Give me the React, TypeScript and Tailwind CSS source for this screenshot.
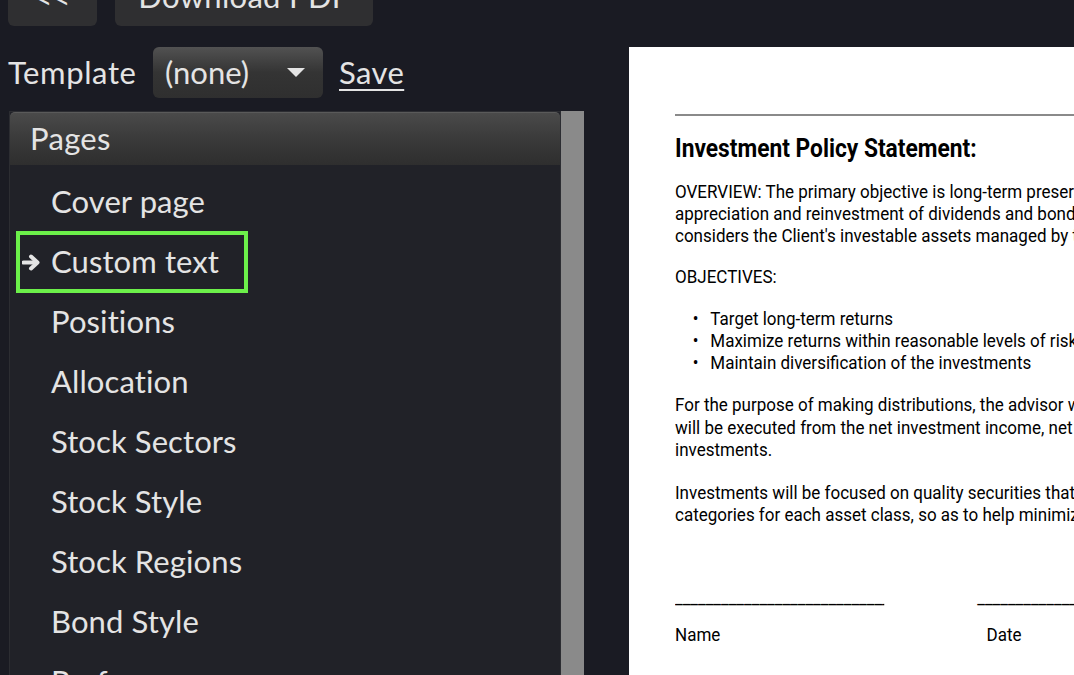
import React from "react";

const items = [
  "Cover page",
  "Custom text",
  "Positions",
  "Allocation",
  "Stock Sectors",
  "Stock Style",
  "Stock Regions",
  "Bond Style",
  "Performance",
];

const ui = { fontFamily: "Lato, 'Open Sans', sans-serif" };
const doc = { fontFamily: "Roboto, 'Liberation Sans', sans-serif" };

export default function App() {
  return (
    <div className="w-[1074px] h-[675px] overflow-hidden bg-[#1a1b23] flex text-[#e4e4e4]" style={ui}>
      {/* Left column */}
      <div className="w-[586px] shrink-0 flex flex-col">
        <div className="flex gap-[18px] pl-[8px] mt-[-26px] h-[52px]">
          <button className="w-[89px] h-[52px] rounded-[6px] bg-[#2f2f31] text-[31px] leading-none text-[#e4e4e4] flex items-center justify-center pb-[6px]">
            &lt;&lt;
          </button>
          <button className="w-[258px] h-[52px] rounded-[6px] bg-[#2f2f31] text-[31px] leading-none tracking-[0.3px] text-[#e4e4e4] flex items-center justify-center pb-[8px]">
            Download PDF
          </button>
        </div>
        <div className="flex items-center h-[51px] mt-[21px] pl-[8px]">
          <span className="text-[31px] leading-none tracking-[0.6px] w-[145px]">Template</span>
          <div className="w-[170px] h-[51px] rounded-[6px] bg-gradient-to-b from-[#525252] via-[#343434] to-[#2f2f2f] flex items-center pl-[12px] pr-[18px] justify-between">
            <span className="text-[31px] leading-none">(none)</span>
            <svg width="18" height="9" viewBox="0 0 18 9">
              <polygon points="0,0 18,0 9,9" fill="#e4e4e4" />
            </svg>
          </div>
          <span className="ml-[16px] text-[31px] leading-none tracking-[0.4px] underline underline-offset-[5px] decoration-2">Save</span>
        </div>
        <div className="flex mt-[13px] ml-[9px] flex-1">
          <div className="w-[552px] bg-[#212228] border-l border-t border-r border-[#2c2d32] flex flex-col">
            <div className="h-[53px] rounded-t-[5px] bg-gradient-to-b from-[#4a4a4a] via-[#3a3a3a] to-[#2e2e2e] border-t border-[#5a5a5a] flex items-center pl-[20px] pb-[2px]">
              <span className="text-[31px] leading-none tracking-[0.3px]">Pages</span>
            </div>
            <div className="pt-[8px] flex flex-col">
              {items.map((it) => (
                <div key={it} className="relative h-[60px] flex items-center pl-[41px] shrink-0 pb-[4px]">
                  {it === "Custom text" && (
                    <>
                      <div className="absolute left-[6px] top-[-2px] w-[232px] h-[62px] border-[4px] border-[#6cf04a]" />
                      <svg className="absolute left-[12px] top-[21px]" width="18" height="17" viewBox="0 0 18 17">
                        <path d="M1.5 8.5 H13" stroke="#e4e4e4" strokeWidth="4" strokeLinecap="round" />
                        <path d="M9 2.5 L15.5 8.5 L9 14.5" stroke="#e4e4e4" strokeWidth="4" fill="none" strokeLinecap="round" strokeLinejoin="round" />
                      </svg>
                    </>
                  )}
                  <span className="text-[31px] leading-none tracking-[0.1px]">{it}</span>
                </div>
              ))}
            </div>
          </div>
          <div className="w-[23px] bg-[#8a8a8a]" />
        </div>
      </div>

      {/* Document preview */}
      <div className="ml-[43px] mt-[47px] flex-1 bg-white overflow-hidden text-black" style={doc}>
        <div className="ml-[46px] mt-[67px] h-[2px] bg-[#8a8a8a]" />
        <div className="pl-[46px] w-[900px]">
          <div className="mt-[17px] h-[32px] whitespace-nowrap">
            <span className="inline-block origin-left scale-x-[0.91] text-[25px] font-bold leading-[32px]">Investment Policy Statement:</span>
          </div>
          <div className="origin-top-left scale-x-[0.93] text-[18.3px] leading-[22px] whitespace-nowrap">
            <div className="mt-[16px]">
              <div>OVERVIEW: The primary objective is long-term preservation of capital with growth through</div>
              <div>appreciation and reinvestment of dividends and bond interest. This Investment Policy Statement</div>
              <div>considers the Client's investable assets managed by the advisor.</div>
            </div>
            <div className="mt-[19px]">OBJECTIVES:</div>
            <ul className="mt-[20px]">
              <li className="flex"><span className="w-[38px] pl-[19px] shrink-0">•</span>Target long-term returns</li>
              <li className="flex"><span className="w-[38px] pl-[19px] shrink-0">•</span>Maximize returns within reasonable levels of risk</li>
              <li className="flex"><span className="w-[38px] pl-[19px] shrink-0">•</span>Maintain diversification of the investments</li>
            </ul>
            <div className="mt-[20px] leading-[22.5px]">
              <div>For the purpose of making distributions, the advisor will make distributions which</div>
              <div>will be executed from the net investment income, net of fees, or from the sale of</div>
              <div>investments.</div>
            </div>
            <div className="mt-[20px]">
              <div>Investments will be focused on quality securities that are diversified across the</div>
              <div>categories for each asset class, so as to help minimize risk.</div>
            </div>
            <div className="mt-[61px] flex">
              <div className="w-[325px] overflow-hidden"><div className="w-[225px] overflow-hidden">________________________________</div></div>
              <div>________________________________</div>
            </div>
            <div className="mt-[15px] flex">
              <div className="w-[335px]">Name</div>
              <div>Date</div>
            </div>
          </div>
        </div>
      </div>
    </div>
  );
}
